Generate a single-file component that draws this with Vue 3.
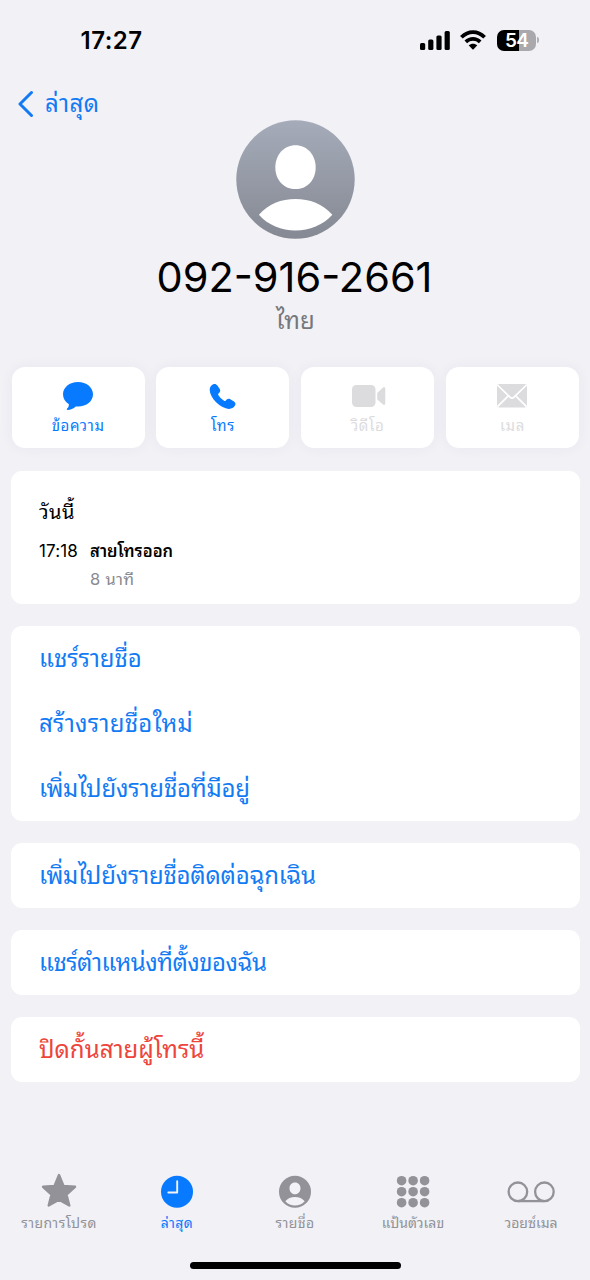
<script setup>
const actions = [
  { id: 'message', label: 'ข้อความ', enabled: true },
  { id: 'call', label: 'โทร', enabled: true },
  { id: 'video', label: 'วิดีโอ', enabled: false },
  { id: 'mail', label: 'เมล', enabled: false },
]
const groups = [
  [
    { text: 'แชร์รายชื่อ', cls: 'r1' },
    { text: 'สร้างรายชื่อใหม่', cls: 'r2' },
    { text: 'เพิ่มไปยังรายชื่อที่มีอยู่', cls: 'r3' },
  ],
  [{ text: 'เพิ่มไปยังรายชื่อติดต่อฉุกเฉิน', cls: 'r4' }],
  [{ text: 'แชร์ตำแหน่งที่ตั้งของฉัน', cls: 'r5' }],
  [{ text: 'ปิดกั้นสายผู้โทรนี้', cls: 'r6 danger' }],
]
const tabs = [
  { id: 'fav', label: 'รายการโปรด' },
  { id: 'recent', label: 'ล่าสุด' },
  { id: 'contacts', label: 'รายชื่อ' },
  { id: 'keypad', label: 'แป้นตัวเลข' },
  { id: 'voicemail', label: 'วอยซ์เมล' },
]
const dots = [0, 1, 2, 3, 4, 5, 6, 7, 8]
</script>

<template>
  <div class="phone">
    <header class="status">
      <span class="time">17:27</span>
      <div class="indicators">
        <svg class="signal" width="30" height="19" viewBox="0 0 30 19">
          <rect x="0" y="12" width="5.2" height="7" rx="1.5" />
          <rect x="8.2" y="8.6" width="5.2" height="10.4" rx="1.5" />
          <rect x="16.4" y="4.4" width="5.2" height="14.6" rx="1.5" />
          <rect x="24.6" y="0" width="5.2" height="19" rx="1.5" />
        </svg>
        <svg class="wifi" width="26" height="20" viewBox="0 0 26 20">
          <g fill="none" stroke="#000" stroke-width="3.7">
            <path d="M1.4 7.3 C8 0.3 18 0.3 24.6 7.3" />
            <path d="M5.8 11.9 C10 7.9 16 7.9 20.2 11.9" />
          </g>
          <path d="M8.7 15.300 C11.200 13.100 14.800 13.100 17.300 15.300 L13.600 19.200 Q13 19.700 12.400 19.200 Z" />
        </svg>
        <div class="battery"><span>54</span></div>
        <i class="nub"></i>
      </div>
    </header>

    <nav class="back">
      <svg width="17" height="28" viewBox="0 0 17 28">
        <path d="M13.500 2.500 L2 14 L13.500 25.500" fill="none" stroke="#127bf4" stroke-width="3" stroke-linecap="round" stroke-linejoin="round" />
      </svg>
      <span>ล่าสุด</span>
    </nav>

    <section class="profile">
      <svg class="avatar" width="119" height="119" viewBox="0 0 118 118">
        <defs>
          <linearGradient id="avatarFill" x1="0" y1="0" x2="0" y2="1">
            <stop offset="0" stop-color="#a5abb9" />
            <stop offset="1" stop-color="#858993" />
          </linearGradient>
        </defs>
        <circle cx="59" cy="59" r="58.700" fill="url(#avatarFill)" />
        <path fill="#fff" d="M59 25 C70.5 25 79 34.5 79 47 C79 60 70 68.500 59 68.500 C48 68.500 39 60 39 47 C39 34.500 47.500 25 59 25 Z" />
        <path fill="#fff" d="M22.700 94 C32 83 45 78.300 59 78.300 C73 78.300 86 83 95.500 94 C86 104.500 73 109.500 59 109.500 C45 109.500 32 104.500 22.700 94 Z" />
      </svg>
      <h1>092-916-2661</h1>
      <p>ไทย</p>
    </section>

    <section class="actions">
      <div v-for="a in actions" :key="a.id" class="action" :class="{ off: !a.enabled }">
        <svg v-if="a.id === 'message'" width="32" height="30" viewBox="0 0 32 30">
          <path d="M16 1 C24.500 1 31 6.500 31 13.300 C31 20.200 24.700 25.500 16 25.500 L13.800 25.400 C11.500 27.400 8.500 28.800 5.600 28.900 C4.800 28.900 4.600 28.200 5.100 27.600 C6.300 26.300 7 25 6.900 23.200 C3.200 21 1 17.500 1 13.300 C1 6.500 7.500 1 16 1 Z" />
        </svg>
        <svg v-else-if="a.id === 'call'" width="32" height="30" viewBox="0 0 32 30">
          <path d="M6.200 3.300 C7.800 2.500 9.300 3 10.400 4.500 L12.700 8 C13.600 9.400 13.300 10.600 12.300 11.700 L11.300 12.700 C10.900 13.200 11 13.600 11.300 14.100 C12.900 16.600 14.700 18.300 17.100 19.800 C17.700 20.200 18.200 20.100 18.600 19.700 L19.700 18.600 C20.800 17.600 22 17.400 23.300 18.200 L27 20.500 C28.600 21.600 28.800 23.100 28 24.600 C26.700 26.900 24.400 28 21.800 27.900 C18 27.700 13.200 25.500 9.100 21.300 C5.200 17.300 2.800 12.600 2.700 9 C2.700 6.400 3.900 4.500 6.200 3.300 Z" />
        </svg>
        <svg v-else-if="a.id === 'video'" class="cam" width="34" height="30" viewBox="0 0 34 30">
          <rect x="0" y="4" width="23.500" height="22" rx="4.500" />
          <path d="M25.200 12 L31 6.600 C32 5.700 33.300 6.200 33.300 7.600 V22.400 C33.300 23.800 32 24.300 31 23.400 L25.200 18.500 Z" />
        </svg>
        <svg v-else width="32" height="30" viewBox="0 0 32 30">
          <rect x="1" y="3" width="30" height="23.500" rx="2.500" />
          <path d="M1.500 4 L14 16.100 Q16 18 18 16.100 L30.500 4 M1.500 25.700 L12.300 14.800 M30.500 25.700 L19.700 14.800" fill="none" stroke="#fff" stroke-width="1.700" />
        </svg>
        <span :class="a.id">{{ a.label }}</span>
      </div>
    </section>

    <section class="card log">
      <h2>วันนี้</h2>
      <div class="entry">
        <span class="when">17:18</span>
        <div>
          <strong>สายโทรออก</strong>
          <small>8 นาที</small>
        </div>
      </div>
    </section>

    <section v-for="(g, i) in groups" :key="i" class="card">
      <div v-for="r in g" :key="r.text" class="row"><span :class="r.cls">{{ r.text }}</span></div>
    </section>

    <footer class="tabs">
      <div v-for="t in tabs" :key="t.id" class="tab" :class="{ active: t.id === 'recent' }">
        <svg v-if="t.id === 'fav'" width="36" height="36" viewBox="0 0 36 36">
          <path d="M18 3 L22.500 14 L34 14.800 L25.500 22.600 L28.300 33.500 L18 27.600 L7.700 33.500 L10.500 22.600 L2 14.800 L13.500 14 Z" stroke="currentColor" stroke-width="2.400" stroke-linejoin="round" />
        </svg>
        <svg v-else-if="t.id === 'recent'" width="36" height="36" viewBox="0 0 36 36">
          <circle cx="18" cy="19.800" r="16" />
          <path d="M18.200 9.300 V20.500 H9.300" fill="none" stroke="#f2f2f7" stroke-width="1.900" stroke-linecap="round" stroke-linejoin="round" />
        </svg>
        <svg v-else-if="t.id === 'contacts'" width="36" height="36" viewBox="0 0 36 36">
          <circle cx="18" cy="19.800" r="16" />
          <path fill="#f2f2f7" d="M18 10.500 C21.300 10.500 23.500 13.100 23.500 16.300 C23.500 19.700 21.100 22.300 18 22.300 C14.900 22.300 12.500 19.700 12.500 16.300 C12.500 13.100 14.700 10.500 18 10.500 Z M8.300 29.300 C10.500 26.400 14 24.900 18 24.900 C22 24.900 25.500 26.400 27.700 29.300 C25 32.200 21.600 33.600 18 33.600 C14.400 33.600 11 32.200 8.300 29.300 Z" />
        </svg>
        <svg v-else-if="t.id === 'keypad'" width="36" height="36" viewBox="0 0 36 36">
          <circle v-for="d in dots" :key="d" :cx="6.600 + (d % 3) * 11.500" :cy="8.700 + Math.floor(d / 3) * 11" r="4.800" />
        </svg>
        <svg v-else width="48" height="36" viewBox="0 0 48 36">
          <g fill="none" stroke="currentColor" stroke-width="2.300">
            <circle cx="10.900" cy="19.800" r="9.300" />
            <circle cx="37.400" cy="19.800" r="9.300" />
            <path d="M10.900 29.100 H37.400" />
          </g>
        </svg>
        <span :class="t.id">{{ t.label }}</span>
      </div>
    </footer>
    <div class="home"></div>
  </div>
</template>

<style>
body { background: #f1f1f6; }
</style>

<style scoped>
.phone {
  display: flex;
  flex-direction: column;
  width: 590px;
  height: 1280px;
  overflow: hidden;
  box-sizing: border-box;
  background: #f1f1f6;
  color: #000;
  font-family: Inter, "Noto Sans Thai Looped", Thonburi, Loma, Umpush, Waree, Garuda, "Noto Sans", sans-serif;
}
h1, h2, p { margin: 0; font-weight: 400; }
span, strong, small { white-space: nowrap; }
.status {
  display: flex;
  justify-content: space-between;
  align-items: center;
  height: 80px;
  padding: 0 51px 0 80.500px;
  box-sizing: border-box;
}
.time { font-size: 24px; font-weight: 600; letter-spacing: 0.500px; }
.indicators { display: flex; align-items: center; }
.wifi { margin: 0 11px 0 10px; }
.battery {
  width: 39px;
  height: 21px;
  border-radius: 7px;
  background: linear-gradient(90deg, #000 56%, #a9a9ad 56%);
  color: #fff;
  font-size: 19px;
  font-weight: 600;
  line-height: 21px;
  letter-spacing: -0.700px;
  text-align: center;
}
.nub { width: 2px; height: 6px; margin-left: 1px; border-radius: 0 2px 2px 0; background: #b0b0b4; }
.back {
  display: flex;
  align-items: center;
  gap: 10px;
  height: 40px;
  padding: 7px 0 0 18px;
  box-sizing: border-box;
  color: #127bf4;
  font-size: 24px;
}
.back span { padding-bottom: 5px; letter-spacing: 0.500px; }
.profile { display: flex; flex-direction: column; align-items: center; height: 247px; padding-left: 1px; }
h1 { height: 50px; margin: 13px 2px 0 0; font-size: 41.500px; line-height: 50px; }
.profile p { height: 34px; margin-top: 2px; color: #77777b; font-size: 24px; line-height: 34px; letter-spacing: 0.200px; }
.actions { display: grid; grid-template-columns: repeat(4, 133px); gap: 11.800px; padding: 0 11px 0 11.600px; }
.action {
  display: flex;
  flex-direction: column;
  align-items: center;
  height: 81px;
  padding-top: 14px;
  box-sizing: border-box;
  border-radius: 13px;
  background: #fff;
  box-shadow: 0 0 14px rgba(60, 60, 90, 0.050);
  color: #087aff;
  font-size: 15px;
  line-height: 30px;
}
.action svg { flex: none; fill: currentColor; }
.action .cam { margin-left: 3px; }
.action span { letter-spacing: 0.600px; }
.off { color: #dcdcde; }
.card { margin: 22px 10px 0 11px; border-radius: 11px; background: #fff; }
.log { height: 133px; margin-top: 23px; padding: 24px 28px 0; box-sizing: border-box; }
h2 { font-size: 20px; line-height: 34px; letter-spacing: 0.400px; }
.entry { display: flex; gap: 12px; margin-top: 8px; line-height: 28px; }
.when { font-size: 17px; letter-spacing: 0.150px; }
strong { display: block; font-size: 16.500px; font-weight: 600; letter-spacing: 0; }
small { display: block; color: #8a8a8e; font-size: 16.500px; letter-spacing: 0.300px; }
.row { display: flex; align-items: center; height: 65px; padding-left: 28px; color: #127bf4; font-size: 24px; line-height: 30px; }
.r1 { letter-spacing: -0.050px; }
.r2 { letter-spacing: 0.270px; }
.r3 { letter-spacing: -0.170px; }
.r4 { letter-spacing: -0.220px; }
.r5 { letter-spacing: -0.500px; }
.r6 { letter-spacing: 0.010px; }
.danger { color: #ed443b; }
.tabs { display: grid; grid-template-columns: repeat(5, 118px); margin-top: 90px; color: #929298; }
.tab { display: flex; flex-direction: column; align-items: center; font-size: 14px; line-height: 30px; }
.tab svg { fill: currentColor; }
.tab span { letter-spacing: 0.400px; }
.tab .keypad { letter-spacing: 0.050px; }
.tab .voicemail { letter-spacing: 0; }
.active { color: #087aff; }
.home { width: 211px; height: 7px; margin: auto auto 11px; border-radius: 4px; background: #000; }
</style>
